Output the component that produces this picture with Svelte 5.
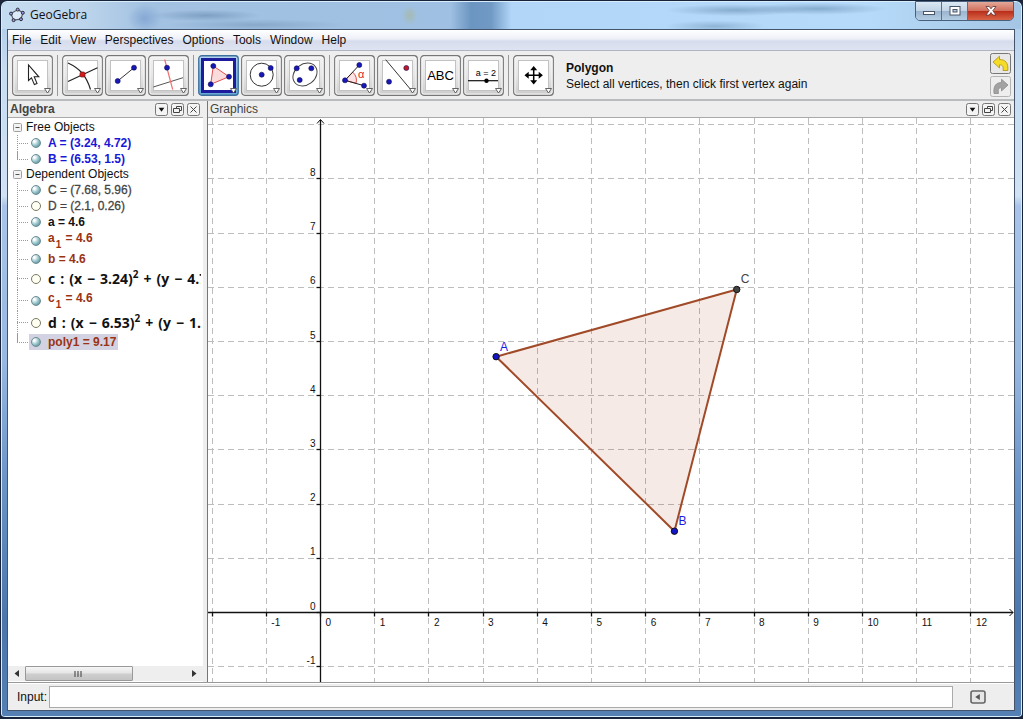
<script>
  const menus = ['File', 'Edit', 'View', 'Perspectives', 'Options', 'Tools', 'Window', 'Help'];

  const toolGroups = [
    ['Move'],
    ['Intersect', 'Segment', 'Perpendicular'],
    ['Polygon', 'Circle', 'Ellipse'],
    ['Angle', 'Reflect', 'Text', 'Slider'],
    ['Pan']
  ];
  let activeTool = $state('Polygon');
  let command = $state('');

  const tree = [
    {
      title: 'Free Objects',
      items: [
        { text: 'A = (3.24, 4.72)', color: 'blue', shown: true },
        { text: 'B = (6.53, 1.5)', color: 'blue', shown: true }
      ]
    },
    {
      title: 'Dependent Objects',
      items: [
        { text: 'C = (7.68, 5.96)', color: 'grey', shown: true },
        { text: 'D = (2.1, 0.26)', color: 'grey', shown: false },
        { text: 'a = 4.6', color: 'black', shown: true },
        { text: 'a', sub: '1', rest: ' = 4.6', color: 'brown', shown: true },
        { text: 'b = 4.6', color: 'brown', shown: true },
        { eq: ['c', '3.24', '4.72'], color: 'black', shown: false },
        { text: 'c', sub: '1', rest: ' = 4.6', color: 'brown', shown: true },
        { eq: ['d', '6.53', '1.5'], color: 'black', shown: false },
        { text: 'poly1 = 9.17', color: 'brown', shown: true, selected: true }
      ]
    }
  ];

  // World to drawing-area coordinates
  const unit = 54.2;
  const ox = 112.5;
  const oy = 494.5;
  const px = (x) => ox + x * unit;
  const py = (y) => oy - y * unit;
  const snap = (v) => Math.floor(v) + 0.5;
  const xs = [-2, -1, 0, 1, 2, 3, 4, 5, 6, 7, 8, 9, 10, 11, 12];
  const ys = [-1, 0, 1, 2, 3, 4, 5, 6, 7, 8, 9];
  const points = [
    { name: 'A', x: 3.24, y: 4.72, fill: '#1414c8', ink: '#1a1ae0' },
    { name: 'B', x: 6.53, y: 1.5, fill: '#1414c8', ink: '#1a1ae0' },
    { name: 'C', x: 7.68, y: 5.96, fill: '#444', ink: '#444' }
  ];
  const outline = points.map((p) => `${px(p.x)},${py(p.y)}`).join(' ');

  let paneWidth = $state(806);
</script>

{#snippet dot(x, y, fill)}
  <circle cx={x} cy={y} r="2.5" {fill} stroke="#0a0a50" stroke-width="0.6" />
{/snippet}

{#snippet toolIcon(name)}
  {@const on = name === activeTool}
  <svg width="41" height="41" viewBox="0 0 41 41" aria-hidden="true">
    <rect x="0.75" y="0.75" width="39.5" height="39.5" rx="3" fill={on ? 'url(#btnOn)' : 'url(#btnOff)'} stroke={on ? '#3c6f9c' : '#767676'} stroke-width="1.3" />
    {#if on}
      <rect x="4.5" y="4.5" width="32" height="32" fill="#fff" stroke="#1c1c9c" stroke-width="3" />
    {:else}
      <rect x="1.9" y="1.9" width="37.2" height="37.2" rx="2" fill="none" stroke="#fafafa" />
      <rect x="5.5" y="5.5" width="30" height="30" fill="#fff" stroke="#c2c2c2" />
    {/if}
    {#if name === 'Move'}
      <path d="M16.5 10V25.5L19.5 22.8L22.4 29.6L25 28.4L22.2 21.8H26.8Z" fill="#fff" stroke="#222" stroke-width="1.1" />
    {:else if name === 'Intersect'}
      <path d="M6 8C17 13 24 20 28.5 34.5M6 26.5L35.5 12.8" fill="none" stroke="#222" stroke-width="1.2" />
      <rect x="18" y="17" width="5" height="5" rx="1.5" fill="#d81818" stroke="#701010" stroke-width="0.7" />
    {:else if name === 'Segment'}
      <path d="M12.7 26L29 12.7" stroke="#333" />
      {@render dot(12.7, 26, '#1818b8')}{@render dot(29, 12.7, '#1818b8')}
    {:else if name === 'Perpendicular'}
      <path d="M5.3 32L35 22.7" stroke="#555" />
      <path d="M16.7 4.5L24.7 34.7" stroke="#f07070" stroke-width="1.2" />
      {@render dot(19, 12.7, '#1818b8')}
    {:else if name === 'Polygon'}
      <path d="M15.3 11L12.7 29.3L31 21.7Z" fill="#fbdcdc" stroke="#e05050" />
      {@render dot(15.3, 11, '#1818b8')}{@render dot(12.7, 29.3, '#1818b8')}{@render dot(31, 21.7, '#1818b8')}
    {:else if name === 'Circle'}
      <circle cx="20.7" cy="19.7" r="11.5" fill="none" stroke="#333" />
      {@render dot(20.7, 19.7, '#1818b8')}{@render dot(29.7, 13, '#1818b8')}
    {:else if name === 'Ellipse'}
      <ellipse cx="21" cy="19.5" rx="13" ry="10.3" transform="rotate(-38 21 19.5)" fill="none" stroke="#444" />
      {@render dot(12.7, 13.3, '#1818b8')}{@render dot(27.3, 13.3, '#1818b8')}{@render dot(15.7, 25, '#1818b8')}
    {:else if name === 'Angle'}
      <path d="M11 25.3L18.8 17.2A11.3 11.3 0 0 1 22 28.3Z" fill="#fde4e4" stroke="#e04848" />
      <path d="M25.3 10L11 25.3L30 30.7" fill="none" stroke="#222" />
      {@render dot(11, 25.3, '#1818b8')}{@render dot(25.3, 10, '#1818b8')}{@render dot(30, 30.7, '#1818b8')}
      <text x="24" y="23" font-size="11" fill="#e02828">α</text>
    {:else if name === 'Reflect'}
      <path d="M8.7 4.7L34.3 35.3" stroke="#333" />
      {@render dot(29.3, 13, '#c81828')}{@render dot(12, 26.7, '#1818b8')}
    {:else if name === 'Text'}
      <text x="20.5" y="25" font-size="13" text-anchor="middle">ABC</text>
    {:else if name === 'Slider'}
      <text x="23" y="21" font-size="9" text-anchor="middle">a = 2</text>
      <path d="M5 25.7H35" stroke="#111" stroke-width="1.2" />
      <circle cx="23.5" cy="25.7" r="2.2" />
    {:else if name === 'Pan'}
      <path d="M20.7 13V27.5M13.5 20.2H28" stroke="#000" stroke-width="1.5" />
      <path d="M20.7 11L17.2 15.2H24.2ZM20.7 29.4L17.2 25.2H24.2ZM11.5 20.2L15.7 16.7V23.7ZM29.9 20.2L25.7 16.7V23.7Z" />
    {/if}
    <path d="M32.5 33.5H38.5L35.5 38Z" fill="#fff" stroke="#555" stroke-width="0.9" />
  </svg>
{/snippet}

{#snippet paneButtons()}
  <span class="pane-buttons">
    <button aria-label="Menu">
      <svg width="13" height="13"><rect x="0.5" y="0.5" width="12" height="12" rx="2" /><path class="solid" d="M3.7 4.7H9.3L6.5 8.7Z" /></svg>
    </button>
    <button aria-label="Undock">
      <svg width="13" height="13"><rect x="0.5" y="0.5" width="12" height="12" rx="2" /><path d="M2.5 5.5H8.5V9.5H2.5ZM5.5 5V3.5H10.5V7.5H9" /></svg>
    </button>
    <button aria-label="Close pane">
      <svg width="13" height="13"><rect x="0.5" y="0.5" width="12" height="12" rx="2" /><path d="M3.5 3.5L9.5 9.5M9.5 3.5L3.5 9.5" /></svg>
    </button>
  </span>
{/snippet}

<svg class="defs" width="0" height="0" aria-hidden="true">
  <linearGradient id="btnOff" x1="0" y1="0" x2="0" y2="1">
    <stop offset="0" stop-color="#f2f2f2" /><stop offset="0.5" stop-color="#e6e6e6" /><stop offset="1" stop-color="#cccccc" />
  </linearGradient>
  <linearGradient id="btnOn" x1="0" y1="0" x2="0" y2="1">
    <stop offset="0" stop-color="#b4d4ee" /><stop offset="0.5" stop-color="#84b8e0" /><stop offset="1" stop-color="#66a8d8" />
  </linearGradient>
</svg>

<div class="window">
  <header class="title">
    <div class="haze" aria-hidden="true"></div>
    <svg class="logo" width="16" height="16" viewBox="0 0 16 16" aria-hidden="true">
      <path d="M8.7 2.6L13.8 5.8L12 12.2L4.6 13.2L2 6.6Z" fill="#dce9f6" stroke="#555b68" stroke-width="1.2" />
      <g fill="#9a9af0" stroke="#222" stroke-width="0.9">
        <circle cx="8.7" cy="2.6" r="1.5" /><circle cx="13.8" cy="5.8" r="1.5" /><circle cx="12" cy="12.2" r="1.5" />
        <circle cx="4.6" cy="13.2" r="1.5" /><circle cx="2" cy="6.6" r="1.5" />
      </g>
    </svg>
    <h1>GeoGebra</h1>
    <div class="win-buttons">
      <button aria-label="Minimize"><svg width="14" height="12"><rect x="1.5" y="6.5" width="11" height="3" fill="#fff" stroke="#4a5468" /></svg></button>
      <button aria-label="Maximize"><svg width="14" height="12"><rect x="2" y="1.5" width="10" height="8.5" fill="#fff" stroke="#4a5468" /><rect x="5" y="4.5" width="4" height="2.5" fill="#b4cbe0" stroke="#4a5468" /></svg></button>
      <button class="close" aria-label="Close"><svg width="14" height="12"><path d="M2 1.5H5.2L7 3.8L8.8 1.5H12L8.8 5.7L12 10H8.8L7 7.6L5.2 10H2L5.2 5.7Z" fill="#fff" stroke="#5c3434" stroke-width="0.8" /></svg></button>
    </div>
  </header>

  <div class="client">
    <nav class="menu">
      {#each menus as item}<button>{item}</button>{/each}
    </nav>

    <div class="toolbar">
      {#each toolGroups as group}
        <div class="group">
          {#each group as name}
            <button aria-label={name} aria-pressed={name === activeTool} onclick={() => (activeTool = name)}>{@render toolIcon(name)}</button>
          {/each}
        </div>
      {/each}
      <p class="help"><b>Polygon</b><br />Select all vertices, then click first vertex again</p>
      <div class="history">
        <button aria-label="Undo">
          <svg width="21" height="21"><rect x="0.5" y="0.5" width="20" height="20" rx="2" fill="#e8e8e8" stroke="#777" /><path d="M3 9L9.5 3.2V6.5C15.5 6.5 18.5 10 17.8 17.5H13C13.8 13.5 12.5 11.8 9.5 11.8V15Z" fill="#f5dc28" stroke="#b89a18" stroke-width="0.9" /></svg>
        </button>
        <button aria-label="Redo">
          <svg width="21" height="21"><rect x="0.5" y="0.5" width="20" height="20" rx="2" fill="#eee" stroke="#b4b4b4" /><path d="M18 9L11.5 3.2V6.5C6 6.5 3.2 10 4 17.5H8.5C7.8 13.5 8.5 11.8 11.5 11.8V15Z" fill="#a2a2a2" stroke="#8c8c8c" stroke-width="0.8" /></svg>
        </button>
      </div>
    </div>

    <main>
      <section class="algebra">
        <div class="pane-head"><h2><b>Algebra</b></h2>{@render paneButtons()}</div>
        <div class="tree">
          {#each tree as branch}
            <div class="branch">
              <div class="branch-title">
                <svg width="9" height="9" aria-hidden="true"><rect x="0.5" y="0.5" width="8" height="8" rx="1" fill="#f2f2f2" stroke="#a0a0a0" /><path d="M2.5 4.5H6.5" stroke="#555" /></svg>
                {branch.title}
              </div>
              <ul>
                {#each branch.items as item}
                  <li class={item.color} class:tall={item.sub} class:equation={item.eq}>
                    <i class="twig"></i>
                    <span class="entry" class:selected={item.selected}>
                      <i class="marble" class:shown={item.shown}></i>
                      {#if item.eq}
                        <span class="math"><span>{item.eq[0]}</span><span>:</span><span>(x</span><span>−</span><span>{item.eq[1]})<sup>2</sup></span><span>+</span><span>(y</span><span>−</span><span>{item.eq[2]})<sup>2</sup></span></span>
                      {:else if item.sub}
                        <span class="indexed">{item.text}<sub>{item.sub}</sub>{item.rest}</span>
                      {:else}
                        <span>{item.text}</span>
                      {/if}
                    </span>
                  </li>
                {/each}
              </ul>
            </div>
          {/each}
        </div>
        <div class="scroll">
          <button aria-label="Scroll left"><svg width="5" height="7"><path d="M5 0V7L0.5 3.5Z" fill="#333" /></svg></button>
          <div class="track"><div class="thumb"><svg width="9" height="6"><path d="M1 0V6M4 0V6M7 0V6" stroke="#555" stroke-width="1.2" /></svg></div></div>
          <button aria-label="Scroll right"><svg width="5" height="7"><path d="M0 0V7L4.5 3.5Z" fill="#333" /></svg></button>
        </div>
      </section>

      <section class="graphics">
        <div class="pane-head"><h2>Graphics</h2>{@render paneButtons()}</div>
        <div class="plane" bind:clientWidth={paneWidth}>
          <svg width="100%" height="100%" role="img" aria-label="Triangle ABC">
            <g class="grid">
              {#each xs as x}{#if x !== 0}<line x1={snap(px(x))} x2={snap(px(x))} y1="0" y2="100%" />{/if}{/each}
              {#each ys as y}{#if y !== 0}<line x1="0" x2="100%" y1={snap(py(y))} y2={snap(py(y))} />{/if}{/each}
            </g>
            <g class="axes">
              <line x1={ox} x2={ox} y1="2" y2="100%" />
              <line x1="0" x2={paneWidth - 1} y1={oy} y2={oy} />
              <path d="M{ox - 3.5} 5.5L{ox} 1.5L{ox + 3.5} 5.5M{paneWidth - 4.5} {oy - 3.5}L{paneWidth - 1} {oy}L{paneWidth - 4.5} {oy + 3.5}" />
              {#each xs as x}<line x1={snap(px(x))} x2={snap(px(x))} y1={oy} y2={oy + 4} />{/each}
              {#each ys as y}{#if y < 9}<line x1={ox - 4} x2={ox} y1={snap(py(y))} y2={snap(py(y))} />{/if}{/each}
            </g>
            <g class="ticks">
              {#each xs as x}{#if x > -2}<text x={px(x) + 5} y={oy + 13}>{x}</text>{/if}{/each}
              {#each ys as y}{#if y < 9}<text x={ox - 5} y={py(y) - 3} text-anchor="end">{y}</text>{/if}{/each}
            </g>
            <polygon points={outline} fill="#993300" fill-opacity="0.1" stroke="#a04a28" stroke-width="2" stroke-linejoin="round" />
            {#each points as p}
              <circle cx={px(p.x)} cy={py(p.y)} r="3.2" fill={p.fill} stroke="#111" />
              <text class="label" x={px(p.x) + 4} y={py(p.y) - 6} fill={p.ink}>{p.name}</text>
            {/each}
          </svg>
        </div>
      </section>
    </main>

    <form class="input-bar" onsubmit={(e) => e.preventDefault()}>
      <label for="command">Input:</label>
      <input id="command" type="text" bind:value={command} autocomplete="off" />
      <button type="button" aria-label="Input help">
        <svg width="16" height="14"><rect x="1" y="1" width="14" height="12" rx="2" fill="#e6e6e6" stroke="#666" stroke-width="1.6" /><path d="M9.8 4V10L5.2 7Z" fill="#555" /></svg>
      </button>
    </form>
  </div>
</div>

<style>
  :global(body) {
    margin: 0;
    background: #1c2638;
  }
  .window {
    box-sizing: border-box;
    height: 100vh;
    display: flex;
    flex-direction: column;
    padding: 2px 7px 6px 6px;
    border: 1px solid #17233b;
    border-bottom-width: 2px;
    border-radius: 7px 7px 5px 5px;
    background: linear-gradient(180deg, #a9c8e6 0, #c6dcf1 70px, #d0e2f3 195px, #a9c4e8 205px, #98b8e0 360px, #6b94c8 480px, #4c76ac 620px, #5580b4 100%);
    box-shadow: inset 0 0 0 1px #d9ecf9;
    font: 12px/16px "Liberation Sans", Arial, sans-serif;
    color: #111;
    position: relative;
  }
  .defs {
    position: absolute;
  }
  button {
    padding: 0;
    border: 0;
    background: none;
    font: inherit;
    color: inherit;
  }
  svg {
    display: block;
  }
  h1,
  h2,
  p,
  ul {
    margin: 0;
    padding: 0;
    font-weight: normal;
  }

  .title {
    flex: none;
    height: 26px;
    display: flex;
    align-items: flex-start;
    position: relative;
  }
  .haze {
    position: absolute;
    inset: -1px -6px 0 -5px;
    border-radius: 6px 6px 0 0;
    background:
      radial-gradient(70px 6px at 72% 30%, #6e95b8aa, transparent),
      radial-gradient(70px 6px at 80% 25%, #6e95b8aa, transparent),
      radial-gradient(50px 6px at 70% 90%, #6e95b888, transparent),
      radial-gradient(55px 6px at 20% 50%, #6d8fb4aa, transparent),
      radial-gradient(90px 6px at 25% 85%, #7c9dc0aa, transparent),
      radial-gradient(8px 10px at 40% 50%, #a7b79aaa, transparent),
      radial-gradient(17px 14px at 14% 60%, #7fa2d0cc, transparent),
      linear-gradient(90deg, #c5dcf0 0, #bdd5ec 8%, #a3c2e2 14%, #9fc0e2 44%, #6c96c2 46%, #7099c4 48%, #b2d6f8 50%, #b6daf9 85%, #a4c6e4 100%);
  }
  .logo {
    margin: 4px 5px 0 2px;
    position: relative;
  }
  h1 {
    font: 12px/16px "Open Sans", "Noto Sans", sans-serif;
    margin-top: 4px;
    position: relative;
  }
  .win-buttons {
    display: flex;
    margin: -2px 1px 0 auto;
    position: relative;
    border: 1px solid #48607c;
    border-radius: 0 0 5px 5px;
    overflow: hidden;
  }
  .win-buttons button {
    width: 26px;
    height: 18px;
    display: grid;
    place-items: center;
    background: linear-gradient(#dce8f4 0, #c2d4e6 48%, #9ab4ce 50%, #b4cde4 100%);
    border-right: 1px solid #5a708a;
  }
  .win-buttons .close {
    width: 45px;
    border: 0;
    background: linear-gradient(#e4a898 0, #d0705c 48%, #b82c18 50%, #d86448 100%);
  }

  .client {
    flex: 1;
    min-height: 0;
    display: flex;
    flex-direction: column;
    border: 1px solid #44546a;
    background: #eee;
  }
  .menu {
    flex: none;
    height: 20px;
    display: flex;
    align-items: center;
    gap: 9px;
    padding-left: 4px;
    background: linear-gradient(#fff 0, #eef0f8 45%, #d6dcec 55%, #dfe4f2 100%);
    border-bottom: 1px solid #b0b4c0;
  }
  .toolbar {
    flex: none;
    height: 48px;
    display: flex;
    align-items: center;
    padding: 0 3px 0 4px;
    border-bottom: 2px solid #b8bcbc;
  }
  .group {
    display: flex;
    gap: 2px;
    padding-right: 4px;
    margin-right: 4px;
    border-right: 1px solid #999;
  }
  .group:nth-child(5) {
    border: 0;
  }
  .help {
    flex: 1;
    padding-left: 4px;
    margin-top: 2px;
  }
  .history {
    display: grid;
    gap: 2px;
  }

  main {
    flex: 1;
    min-height: 0;
    display: grid;
    grid-template-columns: 195px minmax(0, 1fr);
    gap: 4px;
    border-bottom: 1px solid #999;
  }
  section {
    display: flex;
    flex-direction: column;
    min-width: 0;
    min-height: 0;
    background: #fff;
  }
  .graphics {
    border-left: 1px solid #777;
  }
  .pane-head {
    flex: none;
    height: 16px;
    display: flex;
    align-items: center;
    justify-content: space-between;
    padding: 0 3px 0 2px;
    background: #eee;
    border-bottom: 1px solid #aaa;
    color: #444;
  }
  h2 {
    font-size: 12px;
    line-height: 16px;
  }
  .pane-buttons {
    display: flex;
    gap: 3px;
  }
  .pane-buttons svg {
    fill: #f4f4f4;
    stroke: #777;
  }
  .pane-buttons path {
    fill: none;
    stroke: #444;
  }
  .pane-buttons .solid {
    fill: #111;
    stroke: none;
  }

  .tree {
    flex: 1;
    min-height: 0;
    overflow: hidden;
    padding-top: 2px;
    margin-right: 2px;
    white-space: nowrap;
  }
  .branch-title {
    height: 15px;
    line-height: 15px;
    display: flex;
    align-items: center;
    gap: 4px;
    padding-left: 5px;
  }
  ul {
    list-style: none;
    padding-left: 9px;
  }
  li {
    height: 16px;
    display: flex;
    align-items: center;
    font-weight: bold;
    background: linear-gradient(#999 50%, transparent 50%) 0 0 / 1px 2px repeat-y;
  }
  li:last-child {
    background: linear-gradient(#999, #999) 0 0 / 1px 50% no-repeat;
  }
  .twig {
    flex: none;
    width: 12px;
    height: 1px;
    background: repeating-linear-gradient(90deg, #999 0 1px, transparent 1px 2px);
  }
  li.tall {
    height: 21px;
  }
  li.equation {
    height: 23px;
  }
  .entry {
    display: flex;
    align-items: center;
    gap: 7px;
    padding: 0 2px;
    flex: none;
  }
  .entry.selected {
    background: #d2d2e2;
  }
  .marble {
    box-sizing: border-box;
    width: 10px;
    height: 10px;
    border-radius: 50%;
    border: 1px solid #7a7a60;
    background: #fffff4;
  }
  .marble.shown {
    border-color: #6c8c94;
    background: radial-gradient(circle at 30% 30%, #fff 10%, #a4ccd2 45%, #3c7c8c 100%);
  }
  .blue {
    color: #1818d8;
  }
  .grey {
    color: #444;
    font-weight: normal;
    -webkit-text-stroke: 0.3px #444;
  }
  .black {
    color: #111;
  }
  .brown {
    color: #993314;
  }
  .indexed {
    line-height: 16px;
    padding-bottom: 6px;
  }
  sub,
  sup {
    font-size: 10px;
    line-height: 0;
  }
  sub {
    vertical-align: -6px;
    padding: 0 1px;
  }
  sup {
    vertical-align: 6px;
  }
  .math {
    display: flex;
    gap: 5px;
    font: 700 14px/18px "Open Sans", "Noto Sans", sans-serif;
  }

  .scroll {
    flex: none;
    height: 15px;
    display: flex;
    background: #eee;
    margin-bottom: 1px;
  }
  .scroll button {
    width: 17px;
    display: grid;
    place-items: center;
  }
  .track {
    flex: 1;
    display: flex;
  }
  .thumb {
    box-sizing: border-box;
    width: 67%;
    display: grid;
    place-items: center;
    border: 1px solid #999;
    border-radius: 1px;
    background: linear-gradient(#f6f6f6 0, #e4e4e4 48%, #cfcfcf 52%, #c4c4c4 100%);
  }

  .plane {
    flex: 1;
    min-height: 0;
    overflow: hidden;
  }
  .grid line {
    stroke: #bdbdbd;
    stroke-dasharray: 6 4;
  }
  .axes {
    stroke: #111;
    stroke-width: 1;
    fill: none;
  }
  .axes line {
    stroke-width: 1.3;
  }
  .ticks {
    font-size: 10px;
    fill: #111;
  }
  .label {
    font-size: 12px;
  }

  .input-bar {
    flex: none;
    height: 27px;
    box-sizing: border-box;
    display: flex;
    align-items: center;
    padding-left: 9px;
    border-top: 1px solid #fff;
  }
  .input-bar input {
    flex: 1;
    height: 22px;
    box-sizing: border-box;
    margin: 0 17px 0 2px;
    padding: 0 3px;
    border: 1px solid #aaa;
    background: #fff;
    font: inherit;
  }
  .input-bar button {
    margin-right: 28px;
  }
</style>
